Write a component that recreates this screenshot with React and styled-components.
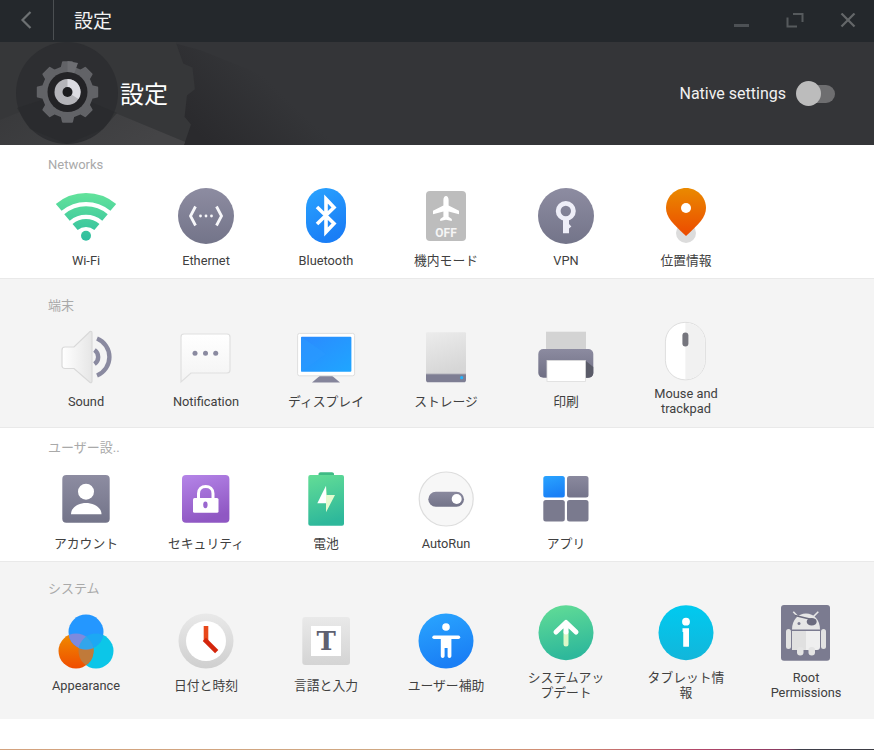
import React from "react";
import styled, { createGlobalStyle } from "styled-components";

const GlobalStyle = createGlobalStyle`
  html, body { margin: 0; padding: 0; background: #fff; }
  body { font-family: Roboto, "Noto Sans CJK JP", sans-serif; }
`;

const Page = styled.div`
  width: 874px;
  height: 750px;
  display: flex;
  flex-direction: column;
  overflow: hidden;
  background: #fff;
`;

const TitleBar = styled.div`
  height: 42px;
  flex: none;
  display: flex;
  align-items: center;
  background: #24282c;
`;

const BackButton = styled.div`
  width: 53px;
  height: 40px;
  align-self: flex-start;
  display: flex;
  align-items: center;
  justify-content: center;
  border-right: 1px solid #4b4f52;
`;

const BarTitle = styled.div`
  margin: 0 0 4px 20px;
  flex: 1;
  color: #f2f2f2;
  font-size: 19px;
  font-family: "Noto Sans CJK JP", sans-serif;
`;

const WindowButtons = styled.div`
  display: flex;
  align-items: center;
  padding-right: 18px;
  gap: 36px;
`;

const Header = styled.div`
  position: relative;
  height: 103px;
  flex: none;
  display: flex;
  align-items: center;
  justify-content: space-between;
  padding: 0 39px 0 120px;
  background: #343538;
`;

const HeaderArt = styled.svg`
  position: absolute;
  left: 0;
  top: 0;
`;

const HeaderTitle = styled.div`
  position: relative;
  margin-bottom: 3px;
  color: #fff;
  font-size: 24px;
  font-family: "Noto Sans CJK JP", sans-serif;
`;

const NativeBox = styled.div`
  position: relative;
  display: flex;
  align-items: center;
  gap: 10px;
  color: #f1f1f1;
  font-size: 16px;
`;

const Track = styled.div`
  position: relative;
  width: 38px;
  height: 18px;
  margin-left: 1px;
  border-radius: 9px;
  background: #6e6e70;
`;

const Thumb = styled.div`
  position: absolute;
  left: -1px;
  top: -4px;
  width: 25px;
  height: 25px;
  border-radius: 50%;
  background: #bcbcbc;
`;

const Section = styled.section`
  flex: none;
  padding: ${(p) => p.$top}px 0 ${(p) => p.$bottom}px;
  background: ${(p) => (p.$grey ? "#f4f4f4" : "#fff")};
  border-bottom: ${(p) => (p.$last ? "none" : "1px solid #e9e9e9")};
`;

const SectionTitle = styled.div`
  height: 18px;
  line-height: 18px;
  padding-left: 48px;
  margin-bottom: ${(p) => p.$gap}px;
  color: #a9a9a9;
  font-size: 13px;
`;

const Row = styled.div`
  display: grid;
  grid-template-columns: repeat(7, 120px);
  align-items: center;
  padding-left: 26px;
`;

const Item = styled.div`
  display: flex;
  flex-direction: column;
  align-items: center;
  gap: ${(p) => p.$labelGap}px;
`;

const IconBox = styled.svg`
  display: block;
  width: 56px;
  height: 56px;
  overflow: visible;
`;

const Label = styled.div`
  width: 84px;
  text-align: center;
  color: #404040;
  font-size: 12.8px;
  line-height: 15px;
`;

const Filler = styled.div`
  flex: 1;
`;

const WallpaperEdge = styled.div`
  height: 1px;
  flex: none;
  background: linear-gradient(90deg, #d3a27e 0%, #cfa882 45%, #d08a72 65%, #b3476a 80%, #8a3a62 90%, #3f3f4a 91.5%, #3c3c44 100%);
`;

const Grad = ({ id, from, to, x2 = 0, y2 = 1 }) => (
  <linearGradient id={id} x1="0" y1="0" x2={x2} y2={y2}>
    <stop offset="0" stopColor={from} />
    <stop offset="1" stopColor={to} />
  </linearGradient>
);

const gearPath = (cx, cy, rOut, rIn, teeth, rot = 0) => {
  const step = (Math.PI * 2) / teeth;
  const pts = [];
  for (let i = 0; i < teeth; i++) {
    const a = i * step + rot;
    [[rIn, -0.3], [rOut, -0.19], [rOut, 0.19], [rIn, 0.3]].forEach(([r, k]) => {
      const t = a + k * step;
      pts.push(`${(cx + r * Math.sin(t)).toFixed(1)},${(cy - r * Math.cos(t)).toFixed(1)}`);
    });
  }
  return "M" + pts.join("L") + "Z";
};

const HeaderBackground = () => (
  <HeaderArt width="874" height="103" viewBox="0 0 874 103">
    <defs>
      <linearGradient id="hShade" gradientUnits="userSpaceOnUse" x1="210" y1="103" x2="270" y2="40">
        <stop offset="0" stopColor="#2a2a2d" />
        <stop offset="1" stopColor="#343538" />
      </linearGradient>
      <Grad id="hWedge" from="#37383a" to="#444446" x2={1} y2={0.4} />
      <clipPath id="hGear">
        <path d={gearPath(67, 51, 128, 120, 14, 0.11)} />
      </clipPath>
    </defs>
    <rect width="874" height="103" fill="#343538" />
    <polygon points="170,0 200,8 440,103 170,103" fill="url(#hShade)" />
    <path d={gearPath(67, 51, 128, 120, 14, 0.11)} fill="#363739" />
    <polygon points="0,78 67,51 190,102 190,103 0,103" fill="url(#hWedge)" clipPath="url(#hGear)" />
    <circle cx="67" cy="51" r="51" fill="#2d2e31" />
    <polygon points="17,66 67,50 117,71 103,87 67,102 30,87" fill="#28292b" opacity="0.55" />
    <path d={gearPath(67.5, 50, 30, 25, 8)} fill="#626367" stroke="#626367" strokeWidth="2" strokeLinejoin="round" />
    <path d="M67.5 19 L78 21 L67.5 50Z" fill="#6d6e72" />
    <circle cx="67.5" cy="50" r="20" fill="#232326" />
    <circle cx="67.5" cy="50" r="13" fill="#b4b4b9" />
    <path d="M67.5 37 A13 13 0 0 1 78.5 57 L67.5 50Z" fill="#dcdce2" />
    <circle cx="67.5" cy="50" r="5" fill="#1b1b1e" />
  </HeaderArt>
);

const Wifi = () => (
  <IconBox viewBox="0 0 56 56">
    <defs>
      <linearGradient id="wifiG" gradientUnits="userSpaceOnUse" x1="0" y1="5" x2="0" y2="53">
        <stop offset="0" stopColor="#63e39b" />
        <stop offset="1" stopColor="#2fbd9f" />
      </linearGradient>
    </defs>
    <g fill="none" stroke="url(#wifiG)">
      <path d="M0.7 19.4 A42.5 42.5 0 0 1 55.3 19.4" strokeWidth="9" />
      <path d="M9 29.4 A29.5 29.5 0 0 1 47 29.4" strokeWidth="8.5" />
      <path d="M17.1 39 A17 17 0 0 1 38.9 39" strokeWidth="8" />
    </g>
    <circle cx="28" cy="47.7" r="5" fill="url(#wifiG)" />
  </IconBox>
);

const Ethernet = () => (
  <IconBox viewBox="0 0 56 56">
    <defs><Grad id="ethG" from="#8d8ca1" to="#737489" /></defs>
    <circle cx="28" cy="28" r="28" fill="url(#ethG)" />
    <g fill="none" stroke="#f7f7fa" strokeWidth="2.8">
      <path d="M17.5 18.5 L12.5 28 L17.5 37.5" />
      <path d="M38.5 18.5 L43.5 28 L38.5 37.5" />
    </g>
    <g fill="#f7f7fa">
      <circle cx="22.5" cy="28" r="1.4" />
      <circle cx="28" cy="28" r="1.4" />
      <circle cx="33.5" cy="28" r="1.4" />
    </g>
  </IconBox>
);

const Bluetooth = () => (
  <IconBox viewBox="0 0 56 56">
    <defs><Grad id="btG" from="#2aa4ff" to="#1a7ef6" x2={0.4} /></defs>
    <rect x="8" y="0" width="40" height="55" rx="20" fill="url(#btG)" />
    <path d="M19 19 L36 35.5 L28 44 L28 11 L36 19.5 L19 36" fill="none" stroke="#fff" strokeWidth="3.6" />
  </IconBox>
);

const AirplaneText = styled.text`
  font-family: Roboto, sans-serif;
  font-size: 12px;
  font-weight: 700;
  fill: #fff;
  opacity: 0.85;
`;

const Airplane = () => (
  <IconBox viewBox="0 0 56 56">
    <rect x="8" y="3" width="40" height="50" rx="4" fill="#bdbdbd" />
    <path fill="#fff" d="M28 8 c1.6 0 2.6 2 2.6 4 v5.5 l10.4 5.3 v3.4 l-10.4-2.6 v5.2 l3.2 2.2 v2 l-5.8-1.2 -5.8 1.2 v-2 l3.2-2.2 v-5.2 l-10.4 2.6 v-3.4 l10.4-5.3 v-5.5 c0-2 1-4 2.6-4z" />
    <AirplaneText x="28" y="48.5" textAnchor="middle">OFF</AirplaneText>
  </IconBox>
);

const Vpn = () => (
  <IconBox viewBox="0 0 56 56">
    <defs><Grad id="vpnG" from="#8d8ca1" to="#737489" /></defs>
    <circle cx="28" cy="28" r="28" fill="url(#vpnG)" />
    <path d="M25 30 h6 v6 l2.4 2.6 -2.4 2 v4.6 h-6z" fill="#eeeef8" />
    <circle cx="27.8" cy="23" r="7.6" fill="none" stroke="#eeeef8" strokeWidth="4.8" />
  </IconBox>
);

const Location = () => (
  <IconBox viewBox="0 0 56 56">
    <defs><Grad id="locG" from="#ea8a00" to="#ec4a00" /></defs>
    <circle cx="28" cy="45" r="10" fill="#dcdcdc" />
    <path d="M28 0 C39 0 48 9 48 20 C48 29 41 36 28 48 C15 36 8 29 8 20 C8 9 17 0 28 0Z" fill="url(#locG)" />
    <circle cx="28" cy="20" r="5" fill="#fff" />
  </IconBox>
);

const Sound = () => (
  <IconBox viewBox="0 0 56 56">
    <defs><Grad id="sndG" from="#ffffff" to="#e6e6e6" x2={1} y2={0} /></defs>
    <path d="M7 17 H16 L32 1.5 C33.5 1 34 2 34 3 V51 C34 52 33.5 53 32 52.5 L16 38.5 H7 C5 38.5 4 37 4 36 V20 C4 18 5 17 7 17Z" fill="url(#sndG)" stroke="#d9d9d9" strokeWidth="1.2" />
    <g fill="none" stroke="#8a8aa0" strokeWidth="4.4">
      <path d="M39 8.5 A20 20 0 0 1 39 45.5" />
      <path d="M36.5 20 A8.5 8.5 0 0 1 36.5 34" />
    </g>
  </IconBox>
);

const Notification = () => (
  <IconBox viewBox="0 0 56 56">
    <defs><Grad id="ntfG" from="#ffffff" to="#f3f3f3" /></defs>
    <path d="M6 4 H49 C51 4 52 5 52 7 V40 C52 42 51 43 49 43 H13 L3 52 V7 C3 5 4 4 6 4Z" fill="url(#ntfG)" stroke="#dfdfdf" strokeWidth="1.2" />
    <g fill="#8a8aa0">
      <circle cx="17" cy="23.3" r="2.5" />
      <circle cx="27.5" cy="23.3" r="2.5" />
      <circle cx="37.7" cy="23.3" r="2.5" />
    </g>
  </IconBox>
);

const Display = () => (
  <IconBox viewBox="0 0 56 56">
    <defs>
      <Grad id="dspG" from="#2b8aff" to="#1fa6ff" x2={1} />
    </defs>
    <polygon points="22,45.7 34,45.7 42,52.5 14,52.5" fill="#85859b" />
    <rect x="-0.4" y="3.4" width="57" height="42.4" rx="2" fill="#fff" stroke="#dedede" strokeWidth="1" />
    <rect x="3" y="6.8" width="50.4" height="35" rx="1" fill="url(#dspG)" />
    <polygon points="3,6.8 28,24 3,41.8" fill="#2a9aff" opacity="0.6" />
  </IconBox>
);

const Storage = () => (
  <IconBox viewBox="0 0 56 56">
    <defs><Grad id="strG" from="#ececec" to="#d6d6d6" x2={0.3} /></defs>
    <rect x="8" y="2.3" width="40" height="43" rx="1" fill="url(#strG)" />
    <path d="M8 44 H48 V50 C48 51.5 47 52.3 46 52.3 H10 C9 52.3 8 51.5 8 50Z" fill="#7e7e93" />
    <rect x="8" y="43.3" width="40" height="1" fill="#bcbcc4" />
    <circle cx="43.7" cy="47.7" r="1.6" fill="#23b5ff" />
  </IconBox>
);

const Printer = () => (
  <IconBox viewBox="0 0 56 56">
    <defs><Grad id="prtG" from="#8c8ba0" to="#6f6f84" /></defs>
    <rect x="8" y="1.7" width="40" height="20" fill="#d3d3d3" />
    <rect x="0.3" y="19" width="55" height="28.7" rx="5" fill="url(#prtG)" />
    <path d="M47 30.3 L55.3 37 V43 C55.3 46 53 47.7 50 47.7 H47Z" fill="#5a5b68" />
    <rect x="9" y="30.5" width="38.4" height="21" fill="#fff" stroke="#dcdcdc" strokeWidth="0.8" />
  </IconBox>
);

const Mouse = () => (
  <IconBox viewBox="0 0 56 56">
    <g transform="translate(0 1)">
      <rect x="7.4" y="-0.6" width="40" height="57.4" rx="19.5" fill="#fff" stroke="#dedede" strokeWidth="1" />
      <path d="M27.4 -0.1 C39 -0.1 46.9 8 46.9 19 V37 C46.9 48 39 56.3 27.4 56.3Z" fill="#f1f1f1" />
      <rect x="24.4" y="9.6" width="6" height="14" rx="3" fill="#75757d" />
    </g>
  </IconBox>
);

const Account = () => (
  <IconBox viewBox="0 0 56 56">
    <defs><Grad id="accG" from="#8d8ca1" to="#737489" /></defs>
    <rect x="4.3" y="4" width="47.4" height="47.7" rx="4" fill="url(#accG)" />
    <circle cx="28" cy="20.7" r="8" fill="#fff" />
    <path d="M13 43.2 C13 36 21 32 28 32 S43.5 36 43.5 43.2Z" fill="#fff" />
  </IconBox>
);

const Security = () => (
  <IconBox viewBox="0 0 56 56">
    <defs><Grad id="secG" from="#b585e8" to="#8f57c3" x2={0.3} /></defs>
    <rect x="4" y="4" width="47.4" height="47.7" rx="4" fill="url(#secG)" />
    <path d="M20.5 28 V22.5 C20.5 18 23.5 15.5 27.7 15.5 S35 18 35 22.5 V28" fill="none" stroke="#fff" strokeWidth="3" />
    <rect x="15" y="27" width="25.5" height="14.7" rx="1.5" fill="#fff" />
    <ellipse cx="27.4" cy="33.8" rx="2.2" ry="3.4" fill="#9a66cf" />
  </IconBox>
);

const Battery = () => (
  <IconBox viewBox="0 0 56 56">
    <defs><Grad id="batG" from="#63dd96" to="#2eb89b" x2={0.2} /></defs>
    <path d="M20.5 4 V3 C20.5 2 21.5 1.3 22.5 1.3 H34 C35 1.3 36 2 36 3 V4Z" fill="#3fbb85" />
    <rect x="10.3" y="4" width="35.7" height="50.7" rx="2" fill="url(#batG)" />
    <polygon points="28,14.7 19.3,32.3 28,32.3" fill="#fff" />
    <polygon points="28,41.3 37,24 28.7,24 28,14.7 28,32.3" fill="#e4fbcf" />
  </IconBox>
);

const AutoRun = () => (
  <IconBox viewBox="0 0 56 56">
    <defs><Grad id="autoG" from="#8a899e" to="#737489" /></defs>
    <circle cx="28.2" cy="28" r="27" fill="#f7f7f7" stroke="#dddddd" strokeWidth="1.2" />
    <rect x="10.3" y="20.7" width="35.7" height="15" rx="7.5" fill="url(#autoG)" />
    <circle cx="38.7" cy="28" r="5" fill="#fff" />
  </IconBox>
);

const Apps = () => (
  <IconBox viewBox="0 0 56 56">
    <defs>
      <Grad id="appB" from="#2aa4ff" to="#1a80f6" x2={0.3} />
      <Grad id="appG" from="#8a899e" to="#74748a" />
    </defs>
    <rect x="5.3" y="5" width="21.5" height="21.5" rx="2.5" fill="url(#appB)" />
    <rect x="29" y="5" width="21.5" height="21.5" rx="2.5" fill="url(#appG)" />
    <rect x="5.3" y="29" width="21.5" height="21.5" rx="2.5" fill="#7a7a8e" />
    <rect x="29" y="29" width="21.5" height="21.5" rx="2.5" fill="#7a7a8e" />
  </IconBox>
);

const Appearance = () => (
  <IconBox viewBox="0 0 56 56">
    <defs>
      <Grad id="appO" from="#ef8c00" to="#f04d00" />
      <clipPath id="clipOrange"><circle cx="18" cy="38" r="17.5" /></clipPath>
      <clipPath id="clipBlue"><circle cx="28" cy="19" r="17.5" /></clipPath>
    </defs>
    <circle cx="38" cy="38" r="17.5" fill="#0cc6e8" />
    <circle cx="18" cy="38" r="17.5" fill="url(#appO)" />
    <circle cx="28" cy="19" r="17.5" fill="#2497ff" />
    <circle cx="38" cy="38" r="17.5" fill="#c07a3a" clipPath="url(#clipOrange)" />
    <circle cx="18" cy="38" r="17.5" fill="#7d8ade" clipPath="url(#clipBlue)" />
    <circle cx="38" cy="38" r="17.5" fill="#1aaef0" clipPath="url(#clipBlue)" opacity="0.75" />
  </IconBox>
);

const Clock = () => (
  <IconBox viewBox="0 0 56 56">
    <defs><Grad id="clkG" from="#e9e9e9" to="#cfcfcf" /></defs>
    <circle cx="28" cy="28" r="27.5" fill="url(#clkG)" />
    <circle cx="28" cy="28" r="20" fill="#fff" />
    <path d="M28 13 V28" stroke="#e8481a" strokeWidth="4.6" fill="none" />
    <path d="M26.4 26.4 L38.7 38.7" stroke="#d4260c" strokeWidth="4.6" fill="none" />
  </IconBox>
);

const SlabLetter = styled.text`
  font-family: "DejaVu Serif", serif;
  font-size: 26px;
  font-weight: 700;
  fill: #5e6070;
`;

const Language = () => (
  <IconBox viewBox="0 0 56 56">
    <defs><Grad id="lngG" from="#e9e9e9" to="#d4d4d4" /></defs>
    <rect x="4.3" y="4" width="47.7" height="48" rx="3" fill="url(#lngG)" />
    <rect x="13" y="13" width="30" height="30" fill="#fff" />
    <SlabLetter x="28.3" y="37" textAnchor="middle">T</SlabLetter>
  </IconBox>
);

const Accessibility = () => (
  <IconBox viewBox="0 0 56 56">
    <defs><Grad id="acsG" from="#2aa6ff" to="#1a7ff5" x2={0.3} /></defs>
    <circle cx="28" cy="28" r="27.5" fill="url(#acsG)" />
    <circle cx="28" cy="14" r="3.8" fill="#fff" />
    <path d="M16 24.3 H40.5" stroke="#fff" strokeWidth="3.4" strokeLinecap="round" />
    <path d="M22.8 24 H33.4 V43 C33.4 45.5 29.6 45.5 29.6 43 V35 H26.6 V43 C26.6 45.5 22.8 45.5 22.8 43Z" fill="#fff" />
  </IconBox>
);

const Update = () => (
  <IconBox viewBox="0 0 56 56">
    <defs><Grad id="updG" from="#63dd96" to="#2eb89b" x2={0.2} /></defs>
    <circle cx="28" cy="27.7" r="27.5" fill="url(#updG)" />
    <path d="M28 27 V39" stroke="#dcf8c8" strokeWidth="5" strokeLinecap="round" />
    <path d="M18 27 L28 17.5 L38 27 M28 18 V27" fill="none" stroke="#fff" strokeWidth="5" strokeLinecap="round" strokeLinejoin="round" />
  </IconBox>
);

const Info = () => (
  <IconBox viewBox="0 0 56 56">
    <defs><Grad id="infG" from="#00caf0" to="#12b6da" /></defs>
    <circle cx="28" cy="27.7" r="27.5" fill="url(#infG)" />
    <circle cx="28" cy="16.7" r="3.9" fill="#fff" />
    <path d="M24.5 23.3 H31 V41.7 H25.2 V27 H24.5Z" fill="#fff" />
  </IconBox>
);

const Root = () => (
  <IconBox viewBox="0 0 56 56">
    <rect x="3" y="0" width="49" height="55.7" rx="3" fill="#7b7b90" />
    <path d="M15.3 6.7 L20 11.7 M40.3 6.7 L35 12" stroke="#e6e6e6" strokeWidth="1.6" />
    <path d="M14 24.5 C14 15 20 8.5 28 8.5 S42 15 42 24.5Z" fill="#e6e6e6" />
    <path d="M17 10.5 L38 15.5" stroke="#6b6b7e" strokeWidth="1.5" />
    <ellipse cx="33.7" cy="16.7" rx="5" ry="3.8" fill="#6b6b7e" />
    <circle cx="21" cy="18.5" r="1.5" fill="#7b7b90" />
    <path d="M14 26 H42 V42 C42 44 41 45 39 45 H17 C15 45 14 44 14 42Z" fill="#efefef" />
    <rect x="14" y="26" width="14" height="19" fill="#e0e0e0" />
    <rect x="8" y="24" width="5" height="20" rx="2.5" fill="#e2e2e2" />
    <rect x="43" y="24" width="5" height="20" rx="2.5" fill="#e2e2e2" />
    <rect x="19" y="42" width="6.5" height="8.5" rx="3.2" fill="#e4e4e4" />
    <rect x="30.5" y="42" width="6.5" height="8.5" rx="3.2" fill="#e4e4e4" />
  </IconBox>
);

const sections = [
  {
    title: "Networks", top: 11, gap: 14, labelGap: 9, bottom: 10,
    items: [
      ["Wi-Fi", Wifi], ["Ethernet", Ethernet], ["Bluetooth", Bluetooth],
      ["機内モード", Airplane], ["VPN", Vpn], ["位置情報", Location],
    ],
  },
  {
    title: "端末", top: 18, gap: 7, labelGap: 8, bottom: 11, grey: true,
    items: [
      ["Sound", Sound], ["Notification", Notification], ["ディスプレイ", Display],
      ["ストレージ", Storage], ["印刷", Printer], ["Mouse and trackpad", Mouse],
    ],
  },
  {
    title: "ユーザー設..", top: 11, gap: 14, labelGap: 9, bottom: 10,
    items: [
      ["アカウント", Account], ["セキュリティ", Security], ["電池", Battery],
      ["AutoRun", AutoRun], ["アプリ", Apps],
    ],
  },
  {
    title: "システム", top: 18, gap: 7, labelGap: 9, bottom: 19, grey: true, last: true,
    items: [
      ["Appearance", Appearance], ["日付と時刻", Clock], ["言語と入力", Language],
      ["ユーザー補助", Accessibility], ["システムアップデート", Update],
      ["タブレット情報", Info], ["Root Permissions", Root],
    ],
  },
];

const App = () => (
  <Page>
    <GlobalStyle />
    <TitleBar>
      <BackButton>
        <svg width="14" height="20" viewBox="0 0 14 20">
          <path d="M10.5 2 L2.5 10 L10.5 18" fill="none" stroke="#6d7173" strokeWidth="2.2" />
        </svg>
      </BackButton>
      <BarTitle>設定</BarTitle>
      <WindowButtons>
        <svg width="17" height="16" viewBox="0 0 17 16">
          <path d="M1 12.5 H16" stroke="#4d5155" strokeWidth="3" />
        </svg>
        <svg width="18" height="16" viewBox="0 0 18 16">
          <path d="M7 1 H16.5 V9 M1.5 4.5 V13.5 H11" fill="none" stroke="#565a5d" strokeWidth="2" />
        </svg>
        <svg width="16" height="16" viewBox="0 0 16 16">
          <path d="M1.5 0.5 L14.5 13.5 M14.5 0.5 L1.5 13.5" stroke="#646769" strokeWidth="2.2" />
        </svg>
      </WindowButtons>
    </TitleBar>
    <Header>
      <HeaderBackground />
      <HeaderTitle>設定</HeaderTitle>
      <NativeBox>
        Native settings
        <Track>
          <Thumb />
        </Track>
      </NativeBox>
    </Header>
    {sections.map((s) => (
      <Section key={s.title} $top={s.top} $bottom={s.bottom} $grey={s.grey} $last={s.last}>
        <SectionTitle $gap={s.gap}>{s.title}</SectionTitle>
        <Row>
          {s.items.map(([name, Icon]) => (
            <Item key={name} $labelGap={s.labelGap}>
              <Icon />
              <Label>{name}</Label>
            </Item>
          ))}
        </Row>
      </Section>
    ))}
    <Filler />
    <WallpaperEdge />
  </Page>
);

export default App;
